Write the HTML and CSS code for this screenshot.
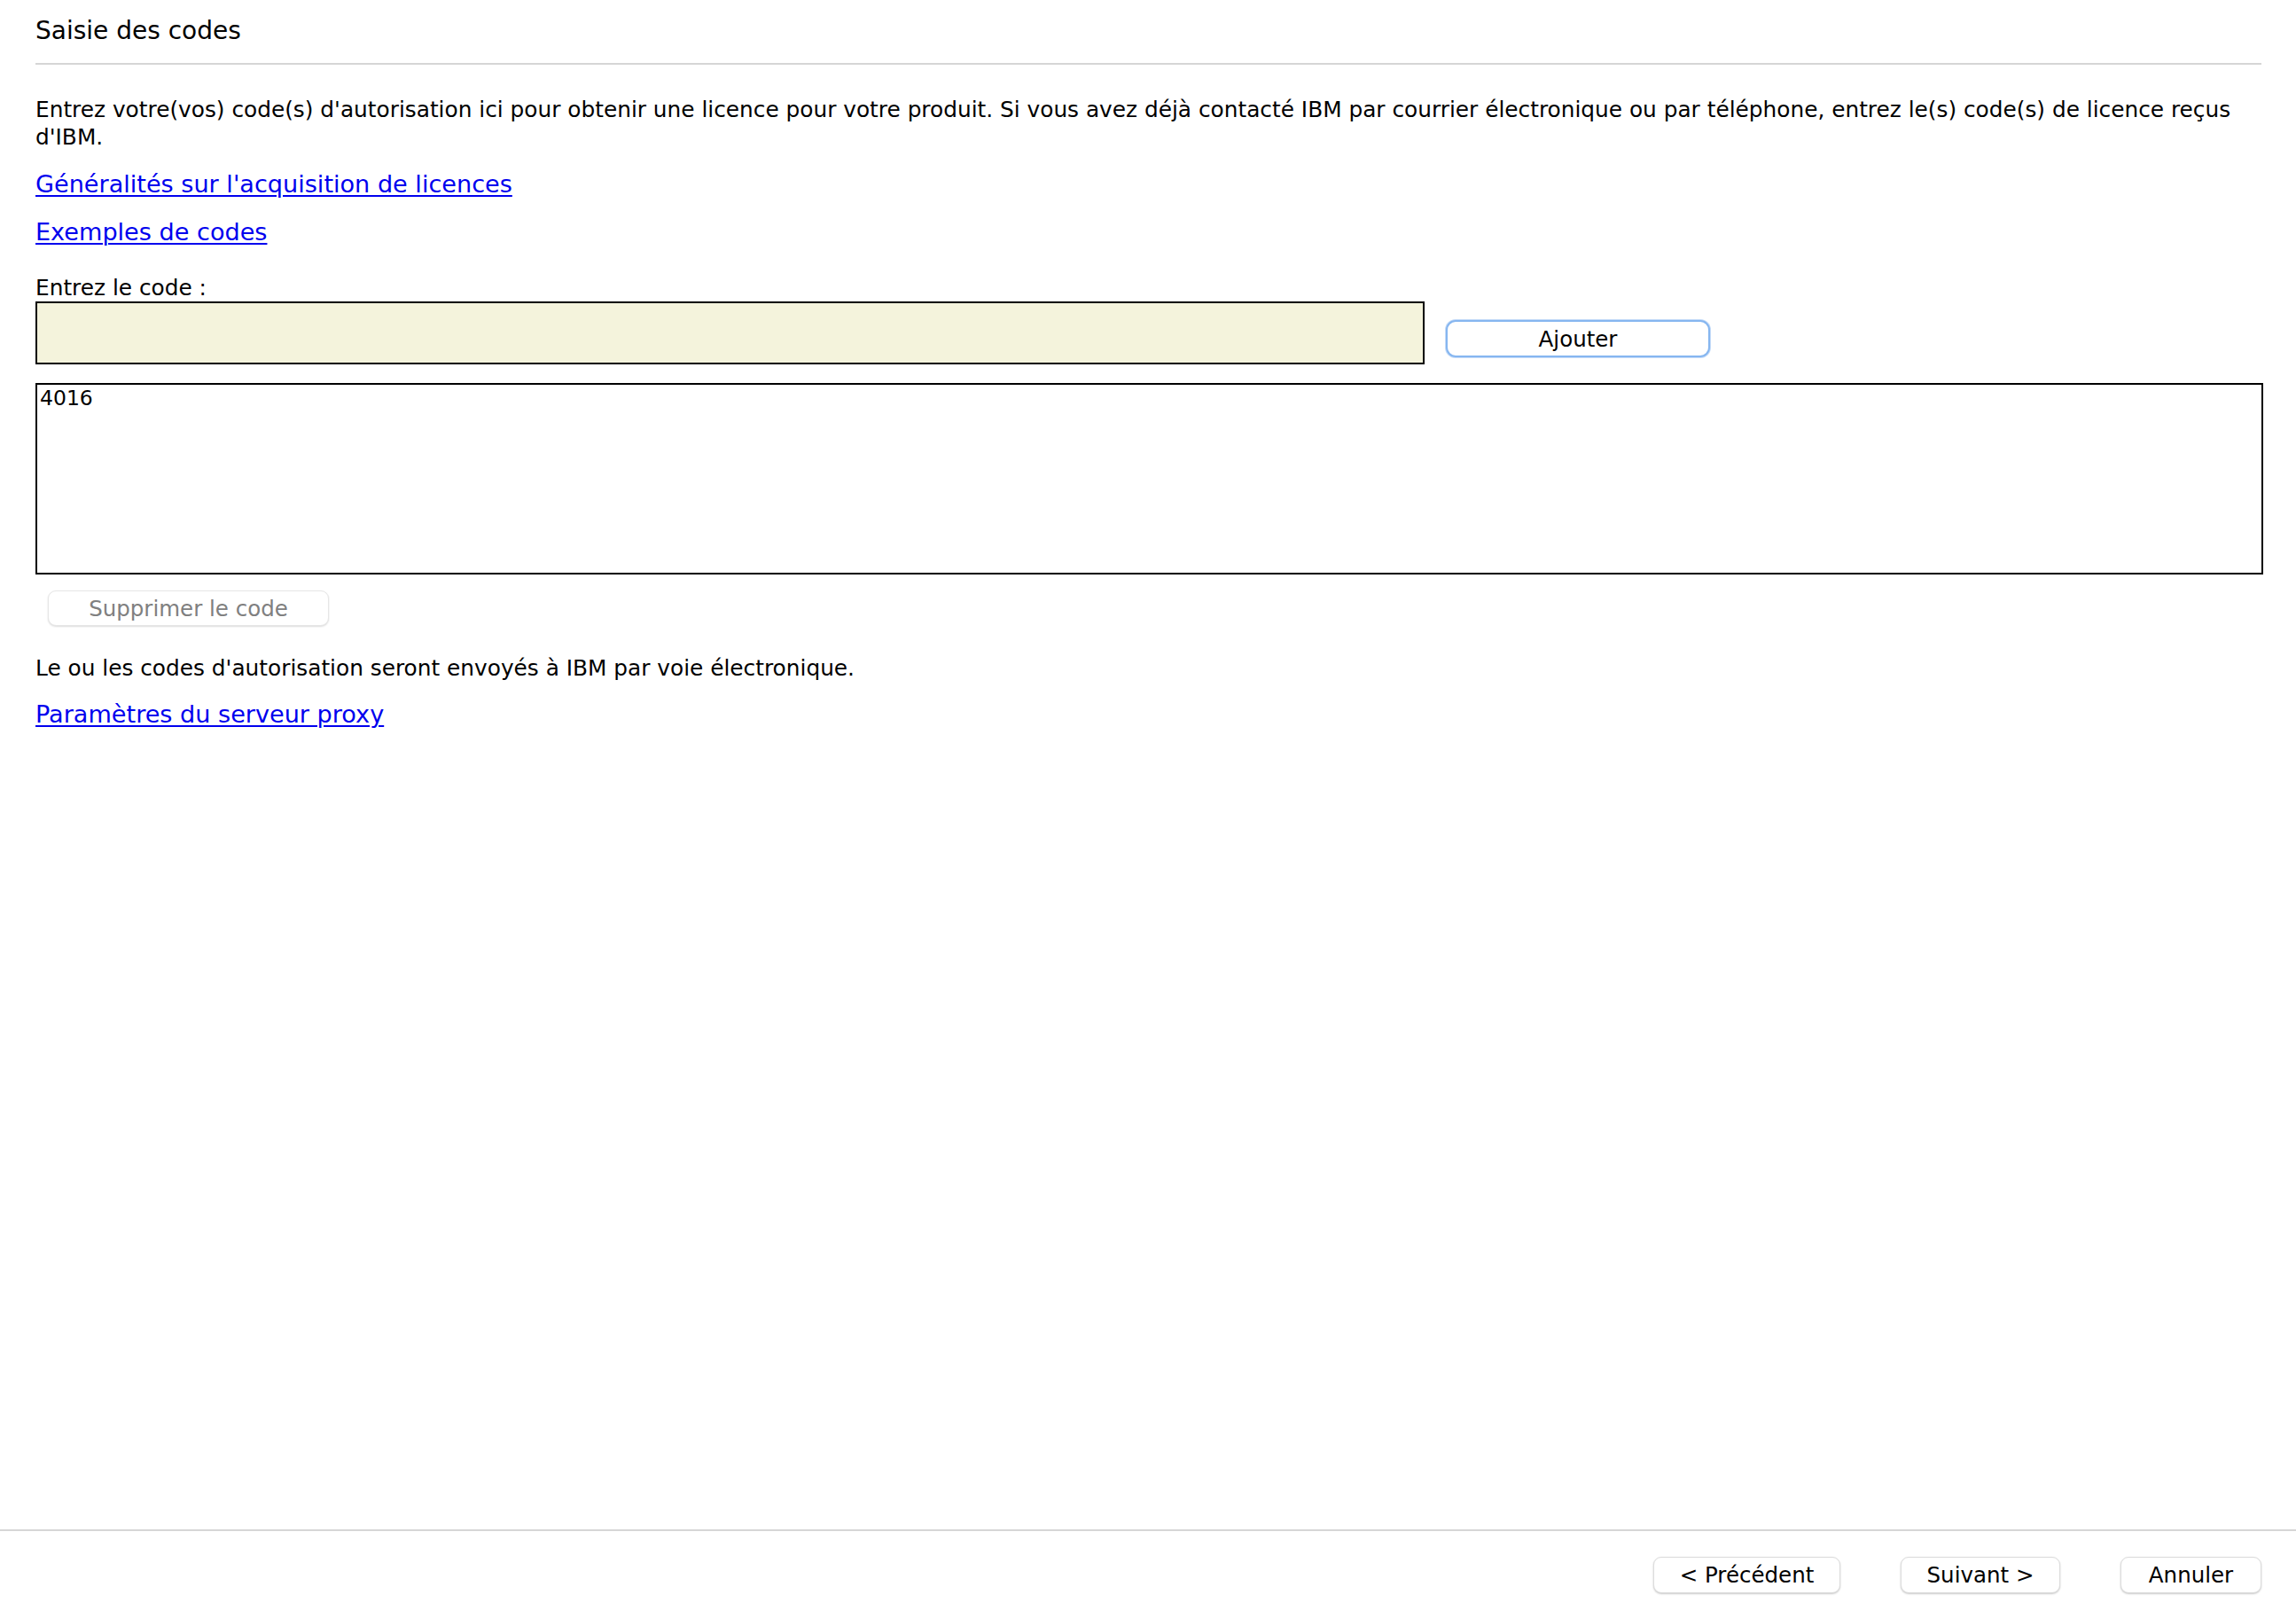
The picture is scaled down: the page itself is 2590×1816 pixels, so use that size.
FILE: index.html
```html
<!DOCTYPE html>
<html lang="fr">
<head>
<meta charset="utf-8">
<title>Saisie des codes</title>
<link rel="stylesheet" href="styles.css">
</head>
<body>
<div class="window">
  <main class="content">
    <header class="header">
      <h1 class="title">Saisie des codes</h1>
    </header>
    <div class="separator"></div>
    <p class="intro">Entrez votre(vos) code(s) d'autorisation ici pour obtenir une licence pour votre produit. Si vous avez déjà contacté IBM par courrier électronique ou par téléphone, entrez le(s) code(s) de licence reçus d'IBM.</p>
    <a class="link link-first" href="#">Généralités sur l'acquisition de licences</a>
    <a class="link link-second" href="#">Exemples de codes</a>
    <label class="label" for="code">Entrez le code :</label>
    <div class="input-row">
      <input id="code" class="code-input" type="text">
      <button class="btn btn-add" type="button">Ajouter</button>
    </div>
    <div class="code-list">
      <div class="code-item">4016</div>
    </div>
    <button class="btn btn-remove" type="button">Supprimer le code</button>
    <p class="note">Le ou les codes d'autorisation seront envoyés à IBM par voie électronique.</p>
    <a class="link link-proxy" href="#">Paramètres du serveur proxy</a>
  </main>
  <footer class="footer">
    <button class="btn btn-nav btn-prev" type="button">&lt; Précédent</button>
    <button class="btn btn-nav btn-next" type="button">Suivant &gt;</button>
    <button class="btn btn-nav btn-cancel" type="button">Annuler</button>
  </footer>
</div>
</body>
</html>
```

FILE: styles.css
```css
* {
  box-sizing: border-box;
}

html, body {
  margin: 0;
  padding: 0;
  background: #ffffff;
}

body {
  font-family: "DejaVu Sans", "Liberation Sans", sans-serif;
  color: #000000;
  font-size: 24.8px;
}

.window {
  display: flex;
  flex-direction: column;
  width: 2590px;
  height: 1816px;
}

.content {
  flex: 1;
  display: flex;
  flex-direction: column;
  align-items: flex-start;
  padding: 0 37px 0 40px;
}

.header {
  padding-top: 18px;
  align-self: stretch;
}

.title {
  margin: 0;
  font-size: 28px;
  line-height: 34px;
  font-weight: normal;
}

.separator {
  align-self: stretch;
  margin-top: 19px;
  margin-right: 2px;
  height: 2px;
  background: #d6d6d6;
}

.intro {
  margin: 35px 0 0 0;
  font-size: 24.8px;
  line-height: 31px;
  align-self: stretch;
}

.link {
  display: block;
  font-size: 27.1px;
  line-height: 34px;
  color: #0000ee;
  text-decoration: underline;
  text-decoration-thickness: 2px;
  text-underline-offset: 3px;
}

.link-first {
  margin-top: 21px;
}

.link-second {
  margin-top: 20px;
}

.label {
  display: block;
  margin-top: 30px;
  font-size: 24.8px;
  line-height: 31px;
}

.input-row {
  display: flex;
  align-items: flex-start;
  align-self: stretch;
}

.code-input {
  width: 1567px;
  height: 71px;
  margin: 0;
  border: 2px solid #000000;
  background: #f4f3dc;
  font-family: inherit;
  font-size: 24.8px;
  padding: 0 6px;
  outline: none;
}

.btn {
  font-family: "DejaVu Sans", "Liberation Sans", sans-serif;
  font-size: 24.5px;
  color: #000000;
  background: #ffffff;
  border: 1px solid #dcdcdc;
  border-radius: 9px;
  box-shadow: 0 1px 2px rgba(0, 0, 0, 0.22);
  padding: 0;
  margin: 0;
  display: flex;
  align-items: center;
  justify-content: center;
  cursor: default;
}

.btn-add {
  margin-left: 24px;
  margin-top: 21px;
  width: 298px;
  height: 42px;
  border: 2px solid #86b6f0;
  border-radius: 11px;
  box-shadow: 0 0 0 1px #c4dbf8;
}

.code-list {
  align-self: stretch;
  margin-top: 21px;
  height: 216px;
  border: 2px solid #000000;
  background: #ffffff;
}

.code-item {
  white-space: nowrap;
  padding-left: 3px;
  font-size: 23.5px;
  line-height: 30px;
}

.btn-remove {
  margin-top: 18px;
  margin-left: 14px;
  width: 317px;
  height: 40px;
  color: #808080;
  border-color: #e6e6e6;
  box-shadow: 0 1px 2px rgba(0, 0, 0, 0.14);
}

.note {
  margin: 32px 0 0 0;
  font-size: 24.8px;
  line-height: 31px;
}

.link-proxy {
  margin-top: 20px;
}

.footer {
  height: 91px;
  border-top: 2px solid #d6d6d6;
  display: flex;
  justify-content: flex-end;
  align-items: flex-start;
  gap: 68px;
  padding: 29px 39px 0 0;
}

.btn-nav {
  height: 41px;
}

.btn-prev {
  width: 211px;
}

.btn-next {
  width: 180px;
}

.btn-cancel {
  width: 159px;
}
```
